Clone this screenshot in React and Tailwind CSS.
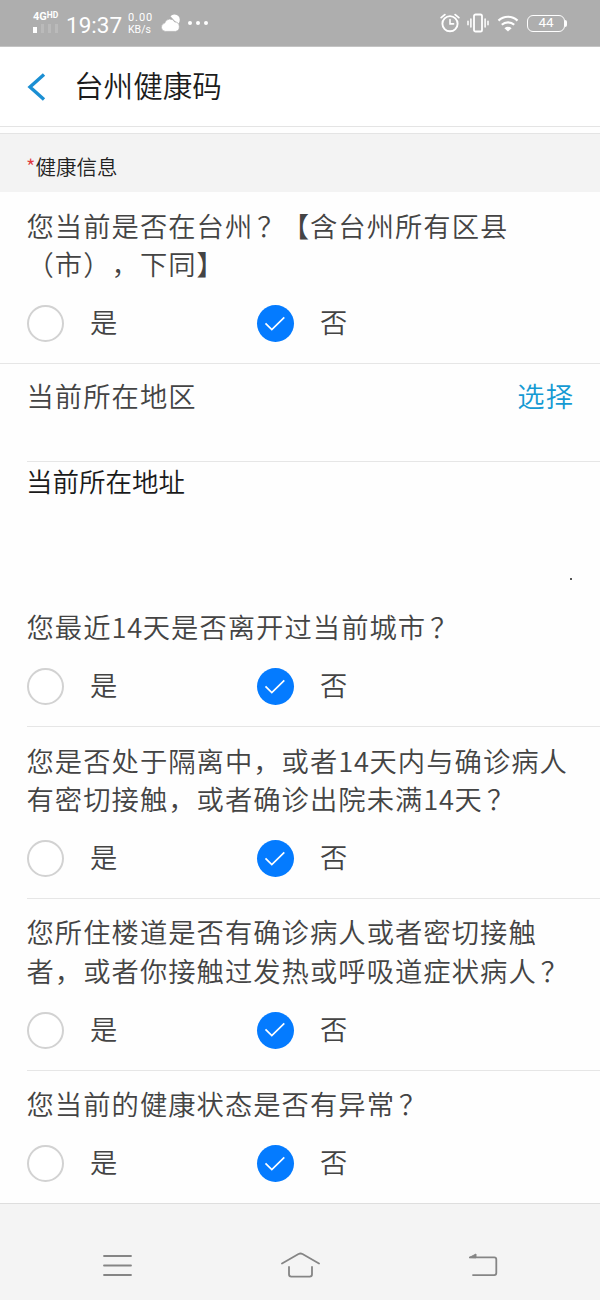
import { useState } from "react";
import clsx from "clsx";

const questions = [
  {
    id: "city",
    lines: ["您最近14天是否离开过当前城市？"],
  },
  {
    id: "contact",
    lines: ["您是否处于隔离中，或者14天内与确诊病人", "有密切接触，或者确诊出院未满14天？"],
  },
  {
    id: "building",
    lines: ["您所住楼道是否有确诊病人或者密切接触", "者，或者你接触过发热或呼吸道症状病人？"],
  },
  {
    id: "status",
    lines: ["您当前的健康状态是否有异常？"],
  },
];

function StatusBar() {
  return (
    <div className="h-[47px] bg-[#aeaeae] border-b border-[#c4c4c4] flex items-center justify-between pl-[33px] pr-[33px] text-white font-['Roboto',sans-serif] font-normal tracking-normal">
      <div className="flex items-center">
        <div className="w-[26px] h-[21px] mb-[2px] flex flex-col justify-between">
          <div className="flex items-start text-[11px] leading-[10px] font-bold">
            4G<span className="text-[8.5px] leading-[7px]">HD</span>
          </div>
          <div className="flex gap-[4px]">
            <span className="w-[4px] h-[6px] mt-[3px] bg-white" />
            <span className="w-[3px] h-[9px] bg-[#bababa]" />
            <span className="w-[3px] h-[9px] bg-[#bababa]" />
            <span className="w-[3px] h-[9px] bg-[#bababa]" />
          </div>
        </div>
        <span className="w-[56px] ml-[7px] mt-[3px] text-[22.5px] leading-6 whitespace-nowrap">19:37</span>
        <div className="w-[26px] ml-[6px] mt-[1px] text-[11px] leading-[11.5px] whitespace-nowrap">
          <div className="tracking-[0.9px]">0.00</div>
          <div className="text-[10.5px]">KB/s</div>
        </div>
        {/* Weather */}
        <svg className="w-[20px] h-[18px] ml-[7px]" viewBox="0 0 20 18" fill="white">
          <path d="M9.5 2.2a5.2 5.2 0 0 1 4-1.6q5 .4 5.3 5.2 0 2.6-1.6 4.4l-4-4z" />
          <path d="M4.3 17.4a4.2 4.2 0 0 1-.6-8.3 5.4 5.4 0 0 1 10-1.2 4.8 4.8 0 0 1 .8 9.5z" stroke="#aeaeae" strokeWidth="0.7" />
        </svg>
        <div className="flex gap-[4px] ml-[7px]">
          <span className="w-[4px] h-[4px] rounded-full bg-white" />
          <span className="w-[4px] h-[4px] rounded-full bg-white" />
          <span className="w-[4px] h-[4px] rounded-full bg-white" />
        </div>
      </div>

      <div className="flex items-center">
        {/* Alarm */}
        <svg className="w-[20px] h-[20px]" viewBox="0 0 20 20" fill="none" stroke="white" strokeWidth="1.9" strokeLinecap="round">
          <circle cx="10" cy="10.7" r="7.6" />
          <path d="M10 6.5v4.4h3.6" strokeWidth="1.6" />
          <path d="M1.2 4.6l3.6-3M18.8 4.6l-3.6-3" strokeWidth="1.8" />
        </svg>
        {/* Vibrate */}
        <svg className="w-[22px] h-[20px] ml-[7px]" viewBox="0 0 22 20" fill="none" stroke="white" strokeWidth="1.8" strokeLinecap="round">
          <rect x="7" y="1.5" width="8" height="17" rx="1.6" />
          <path d="M3.9 6v8M18.1 6v8M1 8.3v3.4M21 8.3v3.4" strokeWidth="1.5" />
        </svg>
        {/* Wifi */}
        <svg className="w-[22px] h-[20px] ml-[8px]" viewBox="0 0 22 20" fill="none" stroke="white" strokeWidth="2.2">
          <path d="M1.5 7.6a13.6 13.6 0 0 1 19 0" />
          <path d="M4.8 11.8a9 9 0 0 1 12.4 0" />
          <path d="M11 18.4l-3.6-3.2a5.2 5.2 0 0 1 7.2 0z" fill="white" stroke="none" />
        </svg>
        <div className="flex items-center ml-[8px]">
          <div className="w-[38px] h-[17px] rounded-[6px] border-[1.5px] border-white flex items-center justify-center text-[13.5px] leading-none">
            44
          </div>
          <span className="w-[2px] h-[7px] rounded-r bg-white" />
        </div>
      </div>
    </div>
  );
}

function Radio({ checked, label, onSelect }) {
  return (
    <button type="button" onClick={onSelect} className="w-[230px] flex items-center text-left">
      <span
        className={clsx(
          "w-[37px] h-[37px] rounded-full flex items-center justify-center",
          checked ? "bg-[#047bff]" : "bg-white border-2 border-[#d2d2d2]"
        )}
      >
        {checked && (
          <svg className="w-[22px] h-[16px]" viewBox="0 0 22 16" fill="none" stroke="white" strokeWidth="1.7">
            <path d="M1.5 7.3l6.3 6.2L20.3 1.3" />
          </svg>
        )}
      </span>
      <span className="ml-[26.5px] pb-[4px] leading-[33px]">{label}</span>
    </button>
  );
}

function Question({ lines, className = "ml-[26.5px] border-b" }) {
  const [value, setValue] = useState("no");

  return (
    <div className={clsx("pt-[13.5px] pb-[20.75px] border-[#e6e6e6]", className)}>
      {lines.map((line) => (
        <p key={line} className="leading-[38.5px] whitespace-nowrap">
          {line.split(/(\d+|？)/).map((part, i) => (
            <span
              key={i}
              className={clsx(
                /\d/.test(part) && "tracking-[0.6px]",
                part === "？" && "pl-[4px] tracking-[-2.95px]"
              )}
            >
              {part}
            </span>
          ))}
        </p>
      ))}
      <div className="flex mt-[22.5px]">
        <Radio label="是" checked={value === "yes"} onSelect={() => setValue("yes")} />
        <Radio label="否" checked={value === "no"} onSelect={() => setValue("no")} />
      </div>
    </div>
  );
}

function NavBar() {
  return (
    <div className="h-[97px] bg-[#f4f4f4] border-t border-[#dedede] pt-[48px] flex text-[#858585]">
      <svg className="w-[30px] h-[26px] ml-[102px]" viewBox="0 0 30 26" fill="none" stroke="currentColor" strokeWidth="1.8" strokeLinecap="round">
        <path d="M2 4h27M2 13.5h27M2 23h27" />
      </svg>
      <svg className="w-[40px] h-[26px] ml-[149px]" viewBox="0 0 40 26" fill="none" stroke="currentColor" strokeWidth="1.8" strokeLinecap="round" strokeLinejoin="round">
        <path d="M1 11.5L17.5 2q2-1 4 0L38 11.5" />
        <path d="M8 15v7.3q0 2.3 2.3 2.3h18.4q2.3 0 2.3-2.3V15" />
      </svg>
      <svg className="w-[30px] h-[26px] ml-[147px]" viewBox="0 0 30 26" fill="none" stroke="currentColor" strokeWidth="1.8" strokeLinecap="round" strokeLinejoin="round">
        <path d="M2 5.4h24.3q2 0 2 2v13.7q0 2-2 2H5" />
        <path d="M1.5 5.4L8 2v3.4z" fill="currentColor" strokeWidth="1" />
      </svg>
    </div>
  );
}

export default function App() {
  return (
    <div className="w-[600px] h-[1300px] overflow-hidden bg-[#fefefe] text-[#444] font-['Noto_Sans_CJK_SC',sans-serif] font-[350] text-[27.3px] tracking-[1.05px] [text-spacing-trim:space-all]">
      <StatusBar />

      {/* Title bar */}
      <div className="h-[80px] bg-white border-b border-[#e4e4e4] flex items-center pl-[27px]">
        <svg className="w-[20px] h-[28px]" viewBox="0 0 20 28" fill="none" stroke="#1b8fd3" strokeWidth="3.4">
          <path d="M17 1.5L3 14l14 12.5" />
        </svg>
        <h1 className="ml-[27px] pb-[3px] text-[29.6px] leading-[36px] tracking-normal text-[#1c1c1c]">台州健康码</h1>
      </div>

      <div className="h-[65px] pt-[6px]">
        <div className="h-[59px] bg-[#f3f3f3] border-t border-[#e4e4e4] flex items-center pl-[26px] pt-[6px] text-[20.5px] tracking-normal text-[#222]">
          <span className="text-[#e0393e]">*</span>健康信息
        </div>
      </div>

      <Question
        lines={["您当前是否在台州？【含台州所有区县", "（市），下同】"]}
        className="pl-[26.5px] border-b"
      />

      <div className="h-[98px] ml-[26.5px] pr-[26px] pt-[12px] border-b border-[#e6e6e6] flex items-start justify-between leading-[38.5px]">
        <span>当前所在地区</span>
        <button type="button" className="text-[#149ad3]">选择</button>
      </div>

      <div className="h-[132px] pl-[26px] pr-[28px] flex flex-col justify-between">
        <label className="text-[26.5px] leading-[37px] tracking-normal text-[#1a1a1a]">当前所在地址</label>
        <span className="self-end mb-[14px] w-[2px] h-[2px] bg-[#555]" />
      </div>

      {questions.map((q, i) => (
        <Question
          key={q.id}
          lines={q.lines}
          className={i < questions.length - 1 ? "ml-[26.5px] border-b" : "ml-[26.5px]"}
        />
      ))}

      <NavBar />
    </div>
  );
}
